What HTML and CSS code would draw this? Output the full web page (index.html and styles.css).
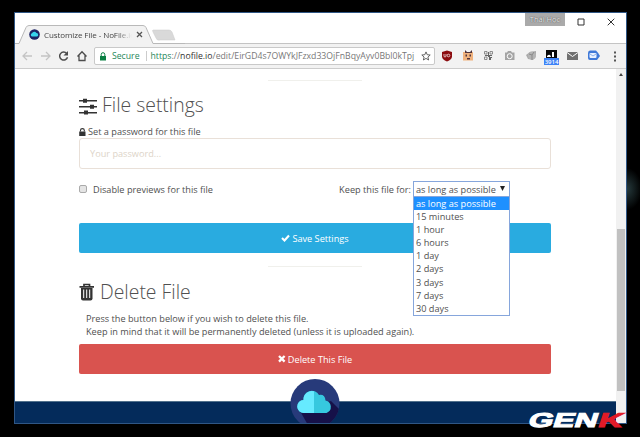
FILE: index.html
```
<!DOCTYPE html>
<html lang="en">
<head>
<meta charset="utf-8">
<title>Customize File - NoFile.io</title>
<link rel="stylesheet" href="styles.css">
</head>
<body>
<div class="desk-glow"></div>
<div class="window">
  <header class="titlebar">
    <svg class="tabs" width="170" height="20" viewBox="0 0 170 20">
      <path d="M0 18.5H4L11 2.5Q12 .5 14 .5H128Q130 .5 131 2.5L138 18.5H170V20H0Z" fill="#f2f2f2"/>
      <path d="M0 18.5H4L11 2.5Q12 .5 14 .5H128Q130 .5 131 2.5L138 18.5H170" fill="none" stroke="#b9b9b9"/>
      <path d="M138 5H154Q156 5 157 7L160 15H145Q142 16 141 13L138 7Q137 5 138 5Z" fill="#d9d9d9" stroke="#cacaca" stroke-width=".5"/>
    </svg>
    <div class="tab">
      <svg width="11" height="11" viewBox="0 0 11 11"><circle cx="5.5" cy="5.5" r="5.3" fill="#1c2364"/><path d="M2.8 7.5a1.7 1.7 0 0 1 .2-3.2 2.4 2.4 0 0 1 4.4-.2 1.8 1.8 0 0 1 .8 3.4Z" fill="#36d3ec"/></svg>
      <span class="tab-title">Customize File - NoFile.io</span>
      <svg width="7" height="7" viewBox="0 0 7 7"><path d="M1 1l5 5M6 1L1 6" stroke="#555" stroke-width="1.3"/></svg>
    </div>
    <div class="profile">Thái Học</div>
    <svg class="winctl max" width="8" height="8" viewBox="0 0 8 8"><path d="M1 1h6v6H1Z" fill="none" stroke="#333"/></svg>
    <svg class="winctl close" width="8" height="8" viewBox="0 0 8 8"><path d="M.7 .7l6.6 6.6M7.3 .7L.7 7.3" stroke="#333"/></svg>
  </header>
  <nav class="toolbar">
    <svg class="navicons" width="78" height="24" viewBox="0 0 78 24" fill="none">
      <g stroke="#c4c4c4" stroke-width="1.3"><path d="M17 12H8.5M12 8l-4 4 4 4M26 12h8.500M31 8l4 4-4 4"/></g>
      <path d="M51.7 9.500A4 4 0 1 0 52.500 13.200" stroke="#4c4c4c" stroke-width="1.5"/><path d="M53 7v4.500h-4.500Z" fill="#4c4c4c"/>
      <path d="M62.500 12.500L67 7.700l4.500 4.800M64 11.500v5h6v-5" stroke="#4c4c4c" stroke-width="1.3"/>
    </svg>
    <div class="address">
      <svg width="6" height="9" viewBox="0 0 6 9"><path d="M0 4h6v4.500H0Z" fill="#0b8043"/><path d="M1.200 4V2.500a1.800 1.800 0 0 1 3.600 0V4" stroke="#0b8043" fill="none"/></svg>
      <span class="secure">Secure</span>
      <span class="url"><i>https</i>://<b>nofile.io</b>/edit/EirGD4s7OWYkJFzxd33OjFnBqyAyv0Bbl0kTpj</span>
      <svg class="star" width="10" height="10" viewBox="0 0 10 10"><path d="M5 .9l1.200 2.800 3 .3-2.300 2 .7 3L5 7.400 2.400 9l.7-3-2.300-2 3-.3Z" fill="none" stroke="#555" stroke-width=".9"/></svg>
    </div>
    <svg class="extensions" width="180" height="24" viewBox="0 0 180 24">
      <path d="M7 6.500l5 1.500v4.500q0 3-5 5-5-2-5-5V8Z" fill="#8c0d10"/><path d="M4 10v2q0 1 1 1t1-1v-2" stroke="#fff" fill="none" stroke-width=".7"/><circle cx="8.500" cy="11.500" r="1.300" stroke="#fff" fill="none" stroke-width=".7"/>
      <path d="M23 8h10v8.500H23Z" fill="#f0b27d"/><path d="M25 6l2 2h3l2-2v3h-7ZM25.500 10.500h1.500v2h-1.500ZM29.500 10.500H31v2h-1.500ZM27 14h3v1.500h-3Z" fill="#51343c"/>
      <path d="M44 7h9v9h-9Z" fill="#eee"/><path d="M44.500 7.500h2.500v2.500h-2.500ZM50 7.500h2.500v2.500H50ZM44.500 13h2.500v2.500h-2.500Z" fill="none" stroke="#777" stroke-width=".8"/><path d="M48 8h1v3h3v1h-2v1h2v1h-1v2h-2v-3h-1v-1h-3v-1h3Z" fill="#666"/>
      <path d="M65 8.500h2l1-1.500h3l1 1.500h2.500V16H65Z" fill="#a4a4a4"/><circle cx="69.700" cy="12.200" r="2.500" fill="#a4a4a4" stroke="#fff"/>
      <path d="M86 11l4-3 6-1v5l-3 4-5-1Z" fill="#aaa"/><circle cx="92" cy="11.500" r="4" fill="#b4b4b4"/><path d="M89 10l3 1 2-3M92 11v5" stroke="#8a8a8a" fill="none"/>
      <path d="M106 6h11v9h-11Z" fill="#080808"/><path d="M112 8h2v5h-2M107 12q3-3 4 1h-4Z" fill="#fff"/>
      <rect x="104" y="14" width="15" height="7" fill="#3c82f7"/><text class="badge" x="111.500" y="19.800">3914</text>
      <path d="M127 8h11v8h-11Z" fill="#707070"/><path d="M127 8.500l5.500 4 5.500-4" stroke="#fff" fill="none"/>
      <path d="M150 6.500h6q3 3 4 5.500l-3 4h-7q-2 0-2-2v-5q0-2.500 2-2.500Z" fill="#3f79d8"/><rect x="149.500" y="9" width="7" height="5" rx="1" fill="#eaf2ff"/><path d="M150 10l3 2 3-2" stroke="#8ab1ee" fill="none"/>
      <path d="M174 7.500h2v2h-2ZM174 11.500h2v2h-2ZM174 15.500h2v2h-2Z" fill="#555"/>
    </svg>
  </nav>
  <div class="viewport">
    <div class="page">
      <main class="content">
        <hr>
        <h1 class="h-settings"><svg width="18" height="17" viewBox="0 0 18 17" fill="#333"><path d="M0 2h18v1.500H0ZM0 8h18v1.500H0ZM0 14h18v1.500H0Z"/><path d="M4 .7h4v4H4ZM11 6.700h4v4h-4ZM5 12.600h4v4H5Z"/></svg><span>File settings</span></h1>
        <label class="pw-label"><svg width="7" height="8" viewBox="0 0 7 8"><path d="M.2 3.500h6.300V8H.2Z" fill="#333"/><path d="M1.500 3.500V2.300a1.900 1.700 0 0 1 3.800 0v1.200" stroke="#333" fill="none" stroke-width="1.100"/></svg><span>Set a password for this file</span></label>
        <div class="password">Your password...</div>
        <div class="options">
          <span class="checkbox"></span><span class="disable">Disable previews for this file</span>
          <span class="keep">Keep this file for:</span>
          <div class="select"><span>as long as possible</span><svg width="6" height="6" viewBox="0 0 6 6"><path d="M0 0h5L2.500 5Z" fill="#222"/></svg>
            <ul class="menu"><li class="on">as long as possible</li><li>15 minutes</li><li>1 hour</li><li>6 hours</li><li>1 day</li><li>2 days</li><li>3 days</li><li>7 days</li><li>30 days</li></ul>
          </div>
        </div>
        <div class="btn save"><svg width="9" height="8" viewBox="0 0 9 8"><path d="M1 4l2.500 2.500L8 1.500" stroke="#fff" stroke-width="2.100" fill="none"/></svg><span>Save Settings</span></div>
        <hr>
        <h1 class="h-delete"><svg width="16" height="18" viewBox="0 0 16 18"><path d="M5 3V1.500h5.500V3M.5 3.800h14.500" stroke="#333" stroke-width="1.700" fill="none"/><path d="M2 5h11.500v10.500q0 2-2 2H4q-2 0-2-2Z" fill="#333"/><path d="M4.700 6.500V15M7.700 6.500V15M10.700 6.500V15" stroke="#fff" stroke-width="1"/></svg><span>Delete File</span></h1>
        <p>Press the button below if you wish to delete this file.<br>Keep in mind that it will be permanently deleted (unless it is uploaded again).</p>
        <div class="btn delete"><svg width="8" height="8" viewBox="0 0 8 8"><path d="M1 1l5.600 5.600M6.600 1L1 6.600" stroke="#fff" stroke-width="2.300"/></svg><span>Delete This File</span></div>
      </main>
      <footer class="footer">
        <svg class="logo" width="50" height="44" viewBox="0 0 50 44">
          <defs><clipPath id="disc"><circle cx="25" cy="24.500" r="24.500"/></clipPath></defs>
          <circle cx="25" cy="24.500" r="24.500" fill="#273a7a"/>
          <path d="M10 32L41 22L60 41V60H26Z" fill="#161149" clip-path="url(#disc)"/>
          <path d="M14 34a6.500 6.500 0 0 1-.5-13 8.300 8.300 0 0 1 15.500-5q6-1 6.500 5.500a6.500 6.500 0 0 1 1 12.500Z" fill="#36c8df"/>
          <path d="M14 34a6.500 6.500 0 0 1-.5-13A8.300 8.300 0 0 1 24 12.300V34Z" fill="#66eaff"/>
        </svg>
      </footer>
    </div>
    <div class="scrollbar"><i class="arrow"></i><i class="thumb"></i></div>
  </div>
</div>
<svg class="watermark" width="110" height="24" viewBox="0 0 110 24"><text transform="translate(2 18) skewX(-18)" textLength="69" lengthAdjust="spacingAndGlyphs">GEN</text><text class="red" transform="translate(72 18) skewX(-18)" textLength="24" lengthAdjust="spacingAndGlyphs">K</text></svg>
</body>
</html>
```
FILE: styles.css
```
* { box-sizing: border-box; }
body { margin: 0; width: 640px; height: 437px; overflow: hidden; background: #000; padding: 12px 0 0 14px; font: 9.18px/13px "Open Sans", sans-serif; color: #505050; position: relative; }
svg { display: block; flex: none; }
span { white-space: nowrap; }
.desk-glow { position: absolute; left: 612px; top: 168px; width: 30px; height: 42px; border-radius: 50%; background: radial-gradient(closest-side, #263a3d, #000); }
.window { position: relative; width: 613px; height: 412px; border: 1px solid #2f5685; background: #fff; display: flex; flex-direction: column; }
.titlebar { height: 31px; position: relative; flex: none; border-bottom: 1px solid #c4c4c4; }
.tabs { position: absolute; left: 0; top: 12px; }
.tab { position: absolute; left: 14px; top: 16px; height: 11px; display: flex; align-items: center; }
.tab-title { font-size: 8px; width: 88px; margin: 0 4px 0 4px; overflow: hidden; color: #444; -webkit-mask-image: linear-gradient(90deg, #000 82%, transparent); mask-image: linear-gradient(90deg, #000 82%, transparent); letter-spacing: -.08px; }
.profile { position: absolute; left: 510px; top: 0; width: 40px; height: 13px; background: #aaa; color: #eee; text-shadow: 0 0 1px #555, 0 0 1px #555; text-align: center; font-size: 7.5px; }
.winctl { position: absolute; top: 5px; }
.max { left: 562px; }
.close { left: 592px; }
.toolbar { height: 25px; flex: none; background: #f2f2f2; border-bottom: 1px solid #ccc; display: flex; align-items: center; }
.address { width: 341px; height: 18px; background: #fff; border: 1px solid #c9c9c9; border-radius: 2px; margin-left: 1px; padding: 0 3px 0 5px; display: flex; align-items: center; font-size: 8.68px; }
.secure { color: #26875a; margin-left: 6px; padding-right: 6px; border-right: 1px solid #ccc; line-height: 10px; }
.url { margin-left: 4px; color: #777; }
.url i { color: #26875a; font-style: normal; }
.url b { color: #333; font-weight: 400; }
.star { margin-left: auto; }
.extensions { margin-left: 5px; }
.badge { font: 600 6px "Open Sans", sans-serif; fill: #fff; text-anchor: middle; }
.viewport { display: flex; flex: 1; min-height: 0; }
.page { width: 601px; display: flex; flex-direction: column; }
.content { width: 472px; margin-left: 64px; height: 332px; padding-top: 11px; }
hr { width: 94px; height: 1px; margin: 0 auto; border: 0; background: #f0f0ec; }
h1 { margin: 0; display: flex; align-items: center; font-size: 19.4px; line-height: 28px; height: 28px; font-weight: 300; color: #505050; }
.h-settings { margin-top: 10px; }
.h-settings svg { margin: 2px 5px 0 0; }
.pw-label { display: flex; align-items: center; margin-top: 6px; height: 13px; }
.pw-label svg { margin-right: 2px; }
.password { height: 31px; border: 1px solid #e9e0d8; border-radius: 3px; padding: 0 10px; line-height: 30px; color: #ddd4c8; }
.options { display: flex; align-items: center; height: 16px; margin-top: 12px; }
.checkbox { width: 8px; height: 8px; border: 1px solid #aaa; border-radius: 2px; background: #e4e4e4; }
.disable { margin-left: 6px; }
.keep { margin-left: auto; }
.select { position: relative; display: flex; align-items: center; justify-content: space-between; width: 97px; height: 16px; border: 1px solid #86a6dc; margin: 0 41px 0 2px; padding: 0 3px 0 2px; background: #fff; }
.menu { position: absolute; z-index: 2; left: -1px; top: 14px; width: 97px; height: 120px; margin: 0; padding: 0; list-style: none; border: 1px solid #86a6dc; background: #fff; }
.menu li { height: 13.1px; line-height: 13px; padding-left: 2px; }
.menu .on { background: #1e90ff; color: #fff; }
.btn { height: 30px; border-radius: 2px; display: flex; align-items: center; justify-content: center; color: #fff; }
.btn svg { margin-right: 2px; }
.save { background: #29abe0; margin: 26px 0 13px; }
.delete { background: #d9534f; margin-top: 6px; }
.h-delete { margin-top: 11px; }
.h-delete svg { margin-right: 5px; }
p { margin: 6px 0 0; padding-left: 7px; white-space: nowrap; }
.footer { flex: 1; background: #042b5b; border-top: 1px solid #52718c; position: relative; }
.logo { position: absolute; left: 275px; top: -23px; }
.scrollbar { width: 10px; position: relative; background: #f1f1f1; }
.arrow { position: absolute; left: 3px; top: 4px; border: 2px solid transparent; border-top: 0; border-bottom: 3px solid #444; }
.thumb { position: absolute; left: 1px; top: 160px; width: 8px; height: 162px; background: #c1c1c1; }
.watermark { position: absolute; left: 525px; top: 409px; overflow: visible; }
.watermark text { font: 700 20px "Liberation Sans", sans-serif; fill: #fff; stroke: #fff; stroke-width: 1; }
.watermark .red { fill: #e21b27; stroke: #e21b27; }
```
